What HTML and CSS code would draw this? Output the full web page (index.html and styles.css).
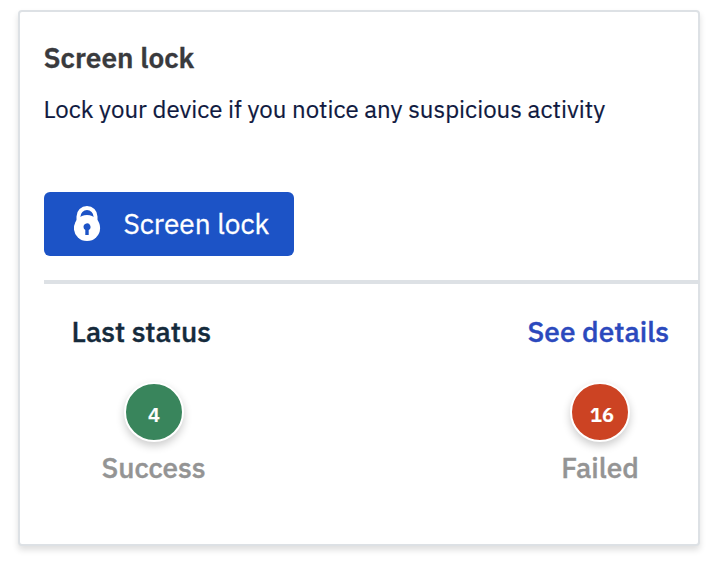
FILE: index.html
```
<!DOCTYPE html>
<html lang="en">
<head>
<meta charset="utf-8">
<title>Screen lock</title>
<link rel="stylesheet" href="styles.css">
</head>
<body>
<section class="card">
  <h2 class="title">Screen lock</h2>
  <p class="description">Lock your device if you notice any suspicious activity</p>
  <button class="lock-button" type="button">
    <svg class="lock-icon" width="28" height="36" viewBox="0 0 28 36" aria-hidden="true">
      <path d="M4.500 17V10.500a8.500 8.500 0 0 1 17 0V17" fill="none" stroke="#fff" stroke-width="4"/>
      <circle cx="13" cy="22" r="13.100" fill="#fff"/>
      <path d="M9.500 20.900a3.500 3.500 0 1 1 5.200 3V29h-3.400v-5.100A3.500 3.500 0 0 1 9.500 20.900z" fill="#1c53c6"/>
    </svg>
    <span class="lock-label">Screen lock</span>
  </button>
  <hr class="divider">
  <div class="status-head">
    <span class="status-title">Last status</span>
    <a class="details">See details</a>
  </div>
  <div class="status-row">
    <div class="status success">
      <span class="badge">4</span>
      <span class="label">Success</span>
    </div>
    <div class="status failed">
      <span class="badge">16</span>
      <span class="label">Failed</span>
    </div>
  </div>
</section>
</body>
</html>
```
FILE: styles.css
```
* { box-sizing: border-box; }
body {
  margin: 0;
  padding: 10px 16px 20px 18px;
  background: #fff;
  font-family: "IBM Plex Sans", Roboto, sans-serif;
}
.card {
  width: 682px;
  height: 536px;
  padding: 28px 0 0 24px;
  background: #fff;
  border: 2px solid #dde1e5;
  border-radius: 4px;
  box-shadow: 0 4px 6px rgba(0, 0, 0, 0.13);
}
.title {
  margin: 0 0 0 -0.5px;
  font-size: 28px;
  line-height: 36px;
  font-weight: 600;
  color: #393a3d;
  -webkit-text-stroke: 0.3px;
}
.description {
  margin: 17px 0 67px -0.5px;
  font-size: 24px;
  line-height: 32px;
  color: #0f1940;
  white-space: nowrap;
  -webkit-text-stroke: 0.2px;
}
.lock-button {
  display: flex;
  align-items: center;
  width: 250px;
  height: 64px;
  padding: 0 0 0 30px;
  border: 0;
  border-radius: 6px;
  background: #1c53c6;
  color: #fff;
  font-family: inherit;
  font-size: 28px;
}
.lock-label {
  margin-left: 21.500px;
  padding-bottom: 2px;
  white-space: nowrap;
  -webkit-text-stroke: 0.3px;
}
.divider {
  height: 4px;
  margin: 24px 0 30px;
  border: 0;
  background: #dde1e5;
}
.status-head {
  display: flex;
  justify-content: space-between;
  padding: 0 29px 0 27.500px;
  font-size: 28px;
  line-height: 36px;
  font-weight: 500;
  -webkit-text-stroke: 0.4px;
}
.status-title { color: #152a3b; }
.details { color: #2b49bd; }
.status-row {
  display: flex;
  justify-content: space-between;
  margin-top: 32px;
  padding: 0 28px 0 40px;
}
.status {
  display: flex;
  flex-direction: column;
  align-items: center;
  width: 140px;
}
.badge {
  width: 60px;
  height: 60px;
  padding-top: 3px;
  border: 2px solid #fff;
  border-radius: 50%;
  box-shadow: 0 4px 8px rgba(0, 0, 0, 0.2);
  color: #fff;
  font-size: 20px;
  line-height: 56px;
  font-weight: 600;
  text-align: center;
  -webkit-text-stroke: 0.2px;
}
.success .badge { background: #39855c; }
.failed .badge { background: #cc4323; padding-left: 4px; }
.label {
  margin-top: 8px;
  font-size: 28px;
  line-height: 36px;
  font-weight: 500;
  color: #949494;
  -webkit-text-stroke: 0.4px;
}
.success .label { margin-left: -1px; }
```
